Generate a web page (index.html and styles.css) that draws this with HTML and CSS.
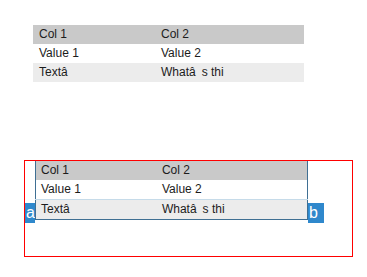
FILE: index.html
```html
<!DOCTYPE html>
<html>
<head>
<meta charset="utf-8">
<link rel="stylesheet" href="styles.css">
</head>
<body>
<div class="page">
  <table class="grid">
    <tr class="head"><td class="c1">Col 1</td><td class="c2">Col 2</td></tr>
    <tr class="row"><td class="c1">Value 1</td><td class="c2">Value 2</td></tr>
    <tr class="alt"><td class="c1">Textâ</td><td class="c2">Whatâ&ensp;s thi</td></tr>
  </table>

  <div class="frame">
    <span class="tag tag-a">a</span>
    <table class="grid boxed">
      <tr class="head"><td class="c1">Col 1</td><td class="c2">Col 2</td></tr>
      <tr class="row"><td class="c1">Value 1</td><td class="c2">Value 2</td></tr>
      <tr class="alt sep"><td class="c1">Textâ</td><td class="c2">Whatâ&ensp;s thi</td></tr>
    </table>
    <span class="tag tag-b">b</span>
  </div>
</div>
</body>
</html>
```

FILE: styles.css
```css
html, body {
  margin: 0;
  padding: 0;
  background: #ffffff;
}

.page {
  padding: 25px 0 0 33px;
  font-family: "Liberation Sans", Arial, sans-serif;
  font-size: 12px;
  color: #1c1c1c;
}

.grid {
  border-collapse: collapse;
  border-spacing: 0;
  width: 271px;
  table-layout: fixed;
}

.grid td {
  height: 19px;
  padding: 0 0 0 6px;
  line-height: 19px;
  white-space: nowrap;
  overflow: hidden;
  box-sizing: border-box;
}

.grid .c1 { width: 122px; }
.grid .c2 { width: 149px; }

.head td { background: #c9c9c9; }
.row td { background: #ffffff; }
.alt td { background: #ececec; }

.frame {
  display: flex;
  align-items: flex-start;
  margin: 78px 0 0 -9px;
  width: 327px;
  height: 95px;
  border: 1px solid #ff0000;
}

.boxed {
  width: 273px;
  border-left: 1px solid #3f6f93;
  border-right: 1px solid #3f6f93;
  border-bottom: 1px solid #3f6f93;
  flex: none;
}

.boxed td { padding-left: 5px; }
.boxed .c1 { width: 121px; }
.boxed .c2 { width: 150px; }

.sep td { border-top: 1px solid #c6dbe9; }

.tag {
  flex: none;
  margin-top: 42px;
  height: 20px;
  line-height: 20px;
  background: #2f88cc;
  color: #ffffff;
  font-family: "Liberation Sans", Arial, sans-serif;
  font-size: 16px;
  box-sizing: border-box;
}

.tag-a {
  width: 10px;
  padding-left: 1px;
}

.tag-b {
  width: 16px;
  padding-left: 1px;
}
```
